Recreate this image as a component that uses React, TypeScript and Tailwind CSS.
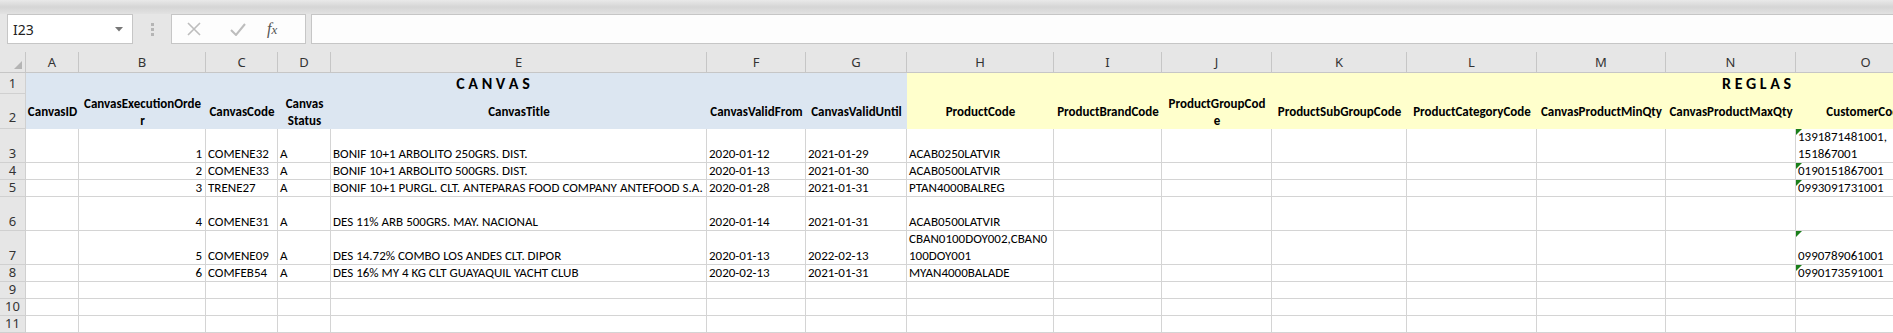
import React from "react";

const COLS = "grid-cols-[26px_53px_127px_72px_53px_376px_99px_101px_147px_108px_110px_135px_130px_129px_130px_140px]";
const LETTERS = ["A","B","C","D","E","F","G","H","I","J","K","L","M","N","O"];

type V = string | string[];
const HEAD2: V[] = [
  "CanvasID",
  ["CanvasExecutionOrde", "r"],
  "CanvasCode",
  ["Canvas", "Status"],
  "CanvasTitle",
  "CanvasValidFrom",
  "CanvasValidUntil",
  "ProductCode",
  "ProductBrandCode",
  ["ProductGroupCod", "e"],
  "ProductSubGroupCode",
  "ProductCategoryCode",
  "CanvasProductMinQty",
  "CanvasProductMaxQty",
  "CustomerCode",
];

const DATA: V[][] = [
  ["", "1", "COMENE32", "A", "BONIF 10+1 ARBOLITO 250GRS. DIST.", "2020-01-12", "2021-01-29", "ACAB0250LATVIR", "", "", "", "", "", "", ["1391871481001,", "151867001"]],
  ["", "2", "COMENE33", "A", "BONIF 10+1 ARBOLITO 500GRS. DIST.", "2020-01-13", "2021-01-30", "ACAB0500LATVIR", "", "", "", "", "", "", "0190151867001"],
  ["", "3", "TRENE27", "A", "BONIF 10+1 PURGL. CLT. ANTEPARAS FOOD COMPANY ANTEFOOD S.A.", "2020-01-28", "2021-01-31", "PTAN4000BALREG", "", "", "", "", "", "", "0993091731001"],
  ["", "4", "COMENE31", "A", "DES 11% ARB 500GRS. MAY. NACIONAL", "2020-01-14", "2021-01-31", "ACAB0500LATVIR", "", "", "", "", "", "", ""],
  ["", "5", "COMENE09", "A", "DES 14.72% COMBO LOS ANDES CLT. DIPOR", "2020-01-13", "2022-02-13", ["CBAN0100DOY002,CBAN0", "100DOY001"], "", "", "", "", "", "", "0990789061001"],
  ["", "6", "COMFEB54", "A", "DES 16% MY 4 KG CLT GUAYAQUIL YACHT CLUB", "2020-02-13", "2021-01-31", "MYAN4000BALADE", "", "", "", "", "", "", "0990173591001"],
  ["", "", "", "", "", "", "", "", "", "", "", "", "", "", ""],
  ["", "", "", "", "", "", "", "", "", "", "", "", "", "", ""],
  ["", "", "", "", "", "", "", "", "", "", "", "", "", "", ""],
];
const TRI = [true, true, true, false, true, true, false, false, false];

function Lines({ v }: { v: V }) {
  if (Array.isArray(v)) {
    return (
      <div className="flex flex-col">
        {v.map((s, i) => (
          <span key={i}>{s}</span>
        ))}
      </div>
    );
  }
  return <span>{v}</span>;
}

export default function App() {
  return (
    <div className="w-[1893px] h-[333px] overflow-hidden bg-[#e6e6e6] font-['Carlito','Lato',sans-serif] text-black">
      {/* ribbon bottom shadow */}
      <div className="h-[14px] bg-gradient-to-b from-[#e9e9e9] via-[#d5d5d5] to-[#e2e2e2]" />
      {/* formula bar */}
      <div className="h-[30px] flex items-stretch">
        <div className="ml-[7px] w-[126px] bg-white border border-[#c6c6c6] flex items-center justify-between pl-[5px] pr-[9px] font-['Noto_Sans',sans-serif] text-[14px] text-[#222]">
          <span>I23</span>
          <svg width="8" height="5" viewBox="0 0 8 5"><polygon points="0,0 8,0 4,4.5" fill="#777" /></svg>
        </div>
        <div className="w-[38px] flex flex-col items-center justify-center gap-[2px]">
          <span className="w-[3px] h-[3px] bg-[#b5b5b5]" />
          <span className="w-[3px] h-[3px] bg-[#b5b5b5]" />
          <span className="w-[3px] h-[3px] bg-[#b5b5b5]" />
        </div>
        <div className="w-[135px] bg-[#fdfdfd] border border-[#c6c6c6] flex items-center">
          <svg className="ml-[15px]" width="14" height="14" viewBox="0 0 14 14"><path d="M1 1 L13 13 M13 1 L1 13" stroke="#bdbdbd" strokeWidth="1.6" /></svg>
          <svg className="ml-[29px]" width="16" height="13" viewBox="0 0 16 13"><path d="M1 7 L6 12 L15 1" stroke="#bdbdbd" strokeWidth="2" fill="none" /></svg>
          <span className="ml-[21px] font-['Liberation_Serif',serif] italic text-[16px] text-[#555] leading-none">f<span className="text-[13px]">x</span></span>
        </div>
        <div className="ml-[5px] flex-1 bg-[#fdfdfd] border-y border-l border-[#c6c6c6]" />
      </div>
      <div className="h-[8px]" />
      {/* sheet */}
      <div className={`grid ${COLS} grid-rows-[21px_21px_35px_34px_17px_17px_34px_34px_17px_17px_17px_17px] text-[13px] leading-[17px]`}>
        {/* corner */}
        <div className="bg-[#e6e6e6] border-r border-b border-[#c6c6c6] flex items-end justify-end pr-[3px] pb-[3px]">
          <svg width="8" height="8" viewBox="0 0 8 8"><polygon points="8,0 8,8 0,8" fill="#b4b4b4" /></svg>
        </div>
        {LETTERS.map((l) => (
          <div key={l} className="bg-[#e6e6e6] border-r border-b border-[#c6c6c6] flex items-center justify-center font-['Noto_Sans',sans-serif] text-[13px] text-[#333]">
            {l}
          </div>
        ))}

        {/* row 1 */}
        <div className="bg-[#e6e6e6] border-r border-b border-[#d0d0d0] flex items-center justify-center font-['Noto_Sans',sans-serif] text-[13px] text-[#333]">1</div>
        <div className="bg-[#dce6f1]" />
        <div className="col-span-6 bg-[#dce6f1] flex items-center justify-center font-bold text-[16px] whitespace-pre">C A N V A S</div>
        <div className="col-span-8 bg-[#ffffcc] flex items-center pl-[815px] font-bold text-[16px] whitespace-pre">R E G L A S</div>

        {/* row 2 */}
        <div className="bg-[#e6e6e6] border-r border-b border-[#d0d0d0] flex items-end justify-center pb-[2px] font-['Noto_Sans',sans-serif] text-[13px] text-[#333]">2</div>
        {HEAD2.map((h, i) => (
          <div
            key={i}
            className={`${i < 7 ? "bg-[#dce6f1]" : "bg-[#ffffcc]"} flex items-center justify-center text-center font-bold whitespace-nowrap`}
          >
            <Lines v={h} />
          </div>
        ))}

        {/* data rows */}
        {DATA.map((row, r) => (
          <React.Fragment key={r}>
            <div className="bg-[#e6e6e6] border-r border-b border-[#d0d0d0] flex items-end justify-center font-['Noto_Sans',sans-serif] text-[13px] text-[#333]">
              {r + 3}
            </div>
            {row.map((v, c) => (
              <div
                key={c}
                className={`relative bg-white border-r border-b border-[#d4d4d4] flex items-end whitespace-nowrap overflow-hidden text-[13px] ${c === 1 ? "justify-end pr-[3px]" : "pl-[2px]"}`}
              >
                {c === 14 && TRI[r] && (
                  <svg className="absolute left-0 top-0" width="6" height="6" viewBox="0 0 6 6"><polygon points="0,0 6,0 0,6" fill="#1a7f1a" /></svg>
                )}
                <Lines v={v} />
              </div>
            ))}
          </React.Fragment>
        ))}
      </div>
    </div>
  );
}
